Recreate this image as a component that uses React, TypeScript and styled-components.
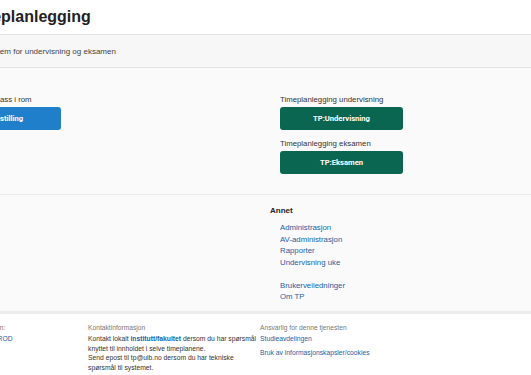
import styled, { createGlobalStyle } from "styled-components";

const GlobalStyle = createGlobalStyle`
  html, body {
    margin: 0;
    padding: 0;
    overflow: hidden;
    background: #ffffff;
  }
  body {
    font-family: "Liberation Sans", Arial, sans-serif;
    color: #333;
  }
`;

// the page is wider than the window and scrolled a bit to the right
const Page = styled.div`
  width: 760px;
  margin-left: -100px;
`;

const Header = styled.header`
  height: 35px;
  display: flex;
  align-items: center;
  padding-left: 64px;
  border-bottom: 1px solid #e2e2e2;
  box-sizing: border-box;
`;

const Title = styled.h1`
  margin: 0;
  font-size: 16px;
  font-weight: 700;
  color: #222;
`;

const SubBand = styled.div`
  height: 33px;
  display: flex;
  align-items: center;
  padding-left: 53px;
  background: #f7f7f7;
  border-bottom: 1px solid #e4e4e4;
  box-sizing: border-box;
  font-size: 8px;
  color: #444;
`;

const Section = styled.section<{ $height: number; $pad: number; $border?: string }>`
  height: ${(p) => p.$height}px;
  background: #fafafa;
  border-bottom: ${(p) => p.$border || "1px solid #ececec"};
  box-sizing: border-box;
  display: grid;
  grid-template-columns: 342px 342px;
  padding-left: ${(p) => p.$pad}px;
`;

const Column = styled.div<{ $top: number }>`
  display: flex;
  flex-direction: column;
  padding-top: ${(p) => p.$top}px;
`;

const Group = styled.div`
  display: flex;
  flex-direction: column;
  margin-bottom: 9px;
`;

const Label = styled.div`
  font-size: 7.8px;
  line-height: 10px;
  color: #333;
  margin-bottom: 2px;
`;

const Button = styled.button<{ $variant: "blue" | "green" }>`
  width: 123px;
  height: 23px;
  border: none;
  border-radius: 3px;
  background: ${(p) => (p.$variant === "blue" ? "#1f7fcb" : "#0b6651")};
  color: #fff;
  font-family: Roboto, "Liberation Sans", sans-serif;
  font-weight: 700;
  font-size: 7.6px;
  padding: 0;
  cursor: pointer;
`;

const Heading = styled.div`
  font-size: 8px;
  font-weight: 700;
  color: #222;
  line-height: 11px;
  margin-bottom: 6px;
`;

const LinkList = styled.ul`
  list-style: none;
  margin: 0;
  padding: 0 0 0 10px;
`;

const LinkItem = styled.li<{ $gap?: boolean }>`
  font-size: 7.8px;
  line-height: 11.5px;
  margin-top: ${(p) => (p.$gap ? "11.5px" : "0")};
`;

const Link = styled.a<{ $bold?: boolean }>`
  color: #245fa3;
  text-decoration: none;
  font-weight: ${(p) => (p.$bold ? 700 : 400)};
`;

const Footer = styled.footer`
  display: grid;
  grid-template-columns: 118px 172px 172px;
  padding: 9px 0 0 70px;
  background: #fff;
`;

const FooterCol = styled.div`
  display: flex;
  flex-direction: column;
  align-items: flex-start;
  font-size: 6.75px;
  line-height: 9.7px;
  color: #333;
`;

const SmallLabel = styled.div`
  font-size: 6.7px;
  line-height: 9px;
  color: #777;
  margin-bottom: 2px;
`;

const Spacer = styled.div`
  height: 4px;
`;

export default function App() {
  return (
    <Page>
      <GlobalStyle />
      <Header>
        <Title>Timeplanlegging</Title>
      </Header>
      <SubBand>Timeplansystem for undervisning og eksamen</SubBand>

      <Section $height={127} $pad={38}>
        <Column $top={27}>
          <Group>
            <Label>Reservasjon av plass i rom</Label>
            <Button $variant="blue">Rombestilling</Button>
          </Group>
        </Column>
        <Column $top={27}>
          <Group>
            <Label>Timeplanlegging undervisning</Label>
            <Button $variant="green">TP:Undervisning</Button>
          </Group>
          <Group>
            <Label>Timeplanlegging eksamen</Label>
            <Button $variant="green">TP:Eksamen</Button>
          </Group>
        </Column>
      </Section>

      <Section $height={119} $pad={28} $border="3px solid #ececec">
        <Column $top={10} />
        <Column $top={10}>
          <Heading>Annet</Heading>
          <LinkList>
            <LinkItem><Link href="#">Administrasjon</Link></LinkItem>
            <LinkItem><Link href="#">AV-administrasjon</Link></LinkItem>
            <LinkItem><Link href="#">Rapporter</Link></LinkItem>
            <LinkItem><Link href="#">Undervisning uke</Link></LinkItem>
            <LinkItem $gap><Link href="#">Brukerveiledninger</Link></LinkItem>
            <LinkItem><Link href="#">Om TP</Link></LinkItem>
          </LinkList>
        </Column>
      </Section>

      <Footer>
        <FooterCol>
          <SmallLabel>Installasjon:</SmallLabel>
          <Link href="#">UiB TP PROD</Link>
        </FooterCol>
        <FooterCol>
          <SmallLabel>Kontaktinformasjon</SmallLabel>
          <div>
            Kontakt lokalt <Link href="#" $bold>institutt/fakultet</Link> dersom du har spørsmål
            knyttet til innholdet i selve timeplanene.
          </div>
          <div>Send epost til tp@uib.no dersom du har tekniske spørsmål til systemet.</div>
        </FooterCol>
        <FooterCol>
          <SmallLabel>Ansvarlig for denne tjenesten</SmallLabel>
          <Link href="#">Studieavdelingen</Link>
          <Spacer />
          <Link href="#">Bruk av informasjonskapsler/cookies</Link>
        </FooterCol>
      </Footer>
    </Page>
  );
}
